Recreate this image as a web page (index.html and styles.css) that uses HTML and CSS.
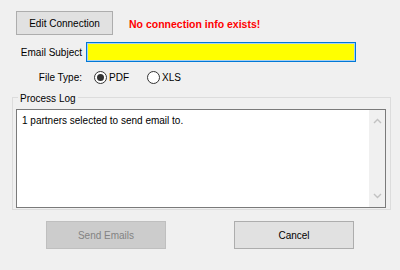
FILE: index.html
```html
<!DOCTYPE html>
<html>
<head>
<meta charset="utf-8">
<link rel="stylesheet" href="styles.css">
</head>
<body>
<div class="dialog">
  <div class="row-top">
    <button class="btn btn-edit">Edit Connection</button>
    <span class="error">No connection info exists!</span>
  </div>
  <div class="row-subject">
    <label class="lbl">Email Subject</label>
    <input class="subject" type="text" value="">
  </div>
  <div class="row-type">
    <span class="lbl">File Type:</span>
    <label class="radio"><input type="radio" name="ft" checked><span>PDF</span></label>
    <label class="radio radio-xls"><input type="radio" name="ft"><span>XLS</span></label>
  </div>
  <fieldset class="group">
    <legend>Process Log</legend>
    <div class="log">
      <div class="log-text">1 partners selected to send email to.</div>
      <div class="scrollbar">
        <svg class="arrow" width="9" height="6" viewBox="0 0 9 6"><path d="M1 5 L4.5 1.5 L8 5" fill="none" stroke="#c2c2c2" stroke-width="1.4"/></svg>
        <svg class="arrow" width="9" height="6" viewBox="0 0 9 6"><path d="M1 1 L4.5 4.5 L8 1" fill="none" stroke="#c2c2c2" stroke-width="1.4"/></svg>
      </div>
    </div>
  </fieldset>
  <div class="row-buttons">
    <button class="btn btn-send" disabled>Send Emails</button>
    <button class="btn btn-cancel">Cancel</button>
  </div>
</div>
</body>
</html>
```
FILE: styles.css
```css
html, body {
  margin: 0;
  padding: 0;
  background: #f0f0f0;
}
body {
  width: 400px;
  height: 270px;
  overflow: hidden;
  font-family: "Liberation Sans", Arial, sans-serif;
  font-size: 10px;
  color: #000;
}
.dialog {
  display: flex;
  flex-direction: column;
}
.btn {
  font-family: inherit;
  font-size: inherit;
  color: #000;
  background: #e1e1e1;
  border: 1px solid #adadad;
  padding: 0;
  margin: 0;
  box-sizing: border-box;
}
.row-top {
  display: flex;
  align-items: center;
  margin-top: 11px;
  padding-left: 16px;
  height: 24px;
}
.btn-edit {
  width: 97px;
  height: 24px;
}
.error {
  margin-left: 16px;
  color: #ff0000;
  font-weight: bold;
  font-size: 10.5px;
  margin-top: 1px;
}
.row-subject {
  display: flex;
  align-items: center;
  margin-top: 7px;
  height: 20px;
}
.lbl {
  width: 82px;
  text-align: right;
  flex: none;
}
.subject {
  margin: 0 0 0 4px;
  width: 270px;
  height: 20px;
  box-sizing: border-box;
  background: #ffff00;
  border: 1px solid #0078d7;
  box-shadow: inset 0 0 0 1px #a8d0f0;
  padding: 0;
  outline: none;
}
.row-type {
  display: flex;
  align-items: center;
  margin-top: 7px;
  height: 16px;
}
.radio {
  display: flex;
  align-items: center;
  margin-left: 12px;
}
.radio-xls {
  margin-left: 18px;
}
.radio input {
  appearance: none;
  -webkit-appearance: none;
  margin: 0 2px 0 0;
  width: 13px;
  height: 13px;
  border: 1px solid #333;
  border-radius: 50%;
  background: #fff;
  box-sizing: border-box;
  display: flex;
  align-items: center;
  justify-content: center;
}
.radio input:checked::after {
  content: "";
  width: 7px;
  height: 7px;
  border-radius: 50%;
  background: #333;
}
.group {
  margin: 3px 9px 0 12px;
  padding: 0 4px 1px 3px;
  border: 1px solid #dcdcdc;
  min-width: 0;
}
.group legend {
  margin-left: 2px;
  padding: 4px 2px 0 2px;
  line-height: 14px;
}
.log {
  margin-top: 3px;
  height: 99px;
  box-sizing: border-box;
  border: 1px solid #7a7a7a;
  background: #fff;
  display: flex;
}
.log-text {
  flex: 1;
  padding: 3px 5px;
  line-height: 15px;
}
.scrollbar {
  width: 16px;
  background: #f0f0f0;
  display: flex;
  flex-direction: column;
  justify-content: space-between;
  align-items: center;
  padding: 8px 0 8px 0;
}
.arrow {
  display: block;
}
.row-buttons {
  display: flex;
  margin-top: 11px;
  padding-left: 46px;
}
.btn-send,
.btn-cancel {
  width: 120px;
  height: 28px;
}
.btn-send {
  background: #cccccc;
  border-color: #bfbfbf;
  color: #838383;
}
.btn-cancel {
  margin-left: 68px;
}
```
